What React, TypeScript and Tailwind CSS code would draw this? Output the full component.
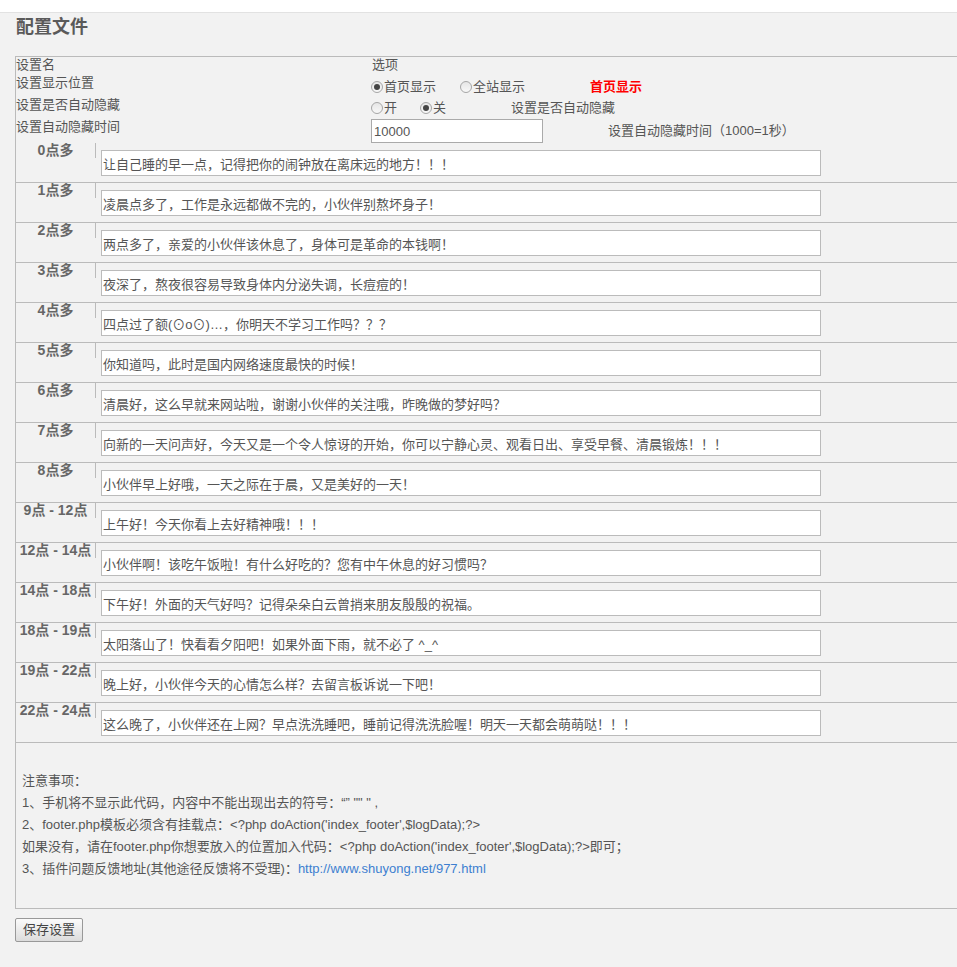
import React from 'react';

const font = { fontFamily: '"Liberation Sans", "Noto Sans CJK SC", sans-serif' };

const rows: [string, string][] = [
  ['0点多', '让自己睡的早一点，记得把你的闹钟放在离床远的地方！！！'],
  ['1点多', '凌晨点多了，工作是永远都做不完的，小伙伴别熬坏身子！'],
  ['2点多', '两点多了，亲爱的小伙伴该休息了，身体可是革命的本钱啊！'],
  ['3点多', '夜深了，熬夜很容易导致身体内分泌失调，长痘痘的！'],
  ['4点多', '四点过了额(⊙o⊙)…，你明天不学习工作吗？？？'],
  ['5点多', '你知道吗，此时是国内网络速度最快的时候！'],
  ['6点多', '清晨好，这么早就来网站啦，谢谢小伙伴的关注哦，昨晚做的梦好吗？'],
  ['7点多', '向新的一天问声好，今天又是一个令人惊讶的开始，你可以宁静心灵、观看日出、享受早餐、清晨锻炼！！！'],
  ['8点多', '小伙伴早上好哦，一天之际在于晨，又是美好的一天！'],
  ['9点 - 12点', '上午好！今天你看上去好精神哦！！！'],
  ['12点 - 14点', '小伙伴啊！该吃午饭啦！有什么好吃的？您有中午休息的好习惯吗？'],
  ['14点 - 18点', '下午好！外面的天气好吗？记得朵朵白云曾捎来朋友殷殷的祝福。'],
  ['18点 - 19点', '太阳落山了！快看看夕阳吧！如果外面下雨，就不必了 ^_^'],
  ['19点 - 22点', '晚上好，小伙伴今天的心情怎么样？去留言板诉说一下吧！'],
  ['22点 - 24点', '这么晚了，小伙伴还在上网？早点洗洗睡吧，睡前记得洗洗脸喔！明天一天都会萌萌哒！！！'],
];

const Radio = ({ checked = false }: { checked?: boolean }) => (
  <span className="inline-flex items-center justify-center w-[12px] h-[12px] rounded-full border border-[#a6a6a6] bg-gradient-to-b from-[#e6e6e6] to-[#f8f8f8] mr-[1px] shrink-0">
    {checked && <span className="w-[6px] h-[6px] rounded-full bg-[#444]" />}
  </span>
);

export default function App() {
  return (
    <div className="min-h-screen bg-[#f2f2f2] text-[#555] text-[13px]" style={font}>
      <div className="h-[13px] bg-white border-b border-[#e2e2e2]" />
      <h2 className="ml-[16px] mt-[2px] text-[18px] leading-[24px] font-bold text-[#5a5a5a]">配置文件</h2>

      <div className="ml-[15px] mt-[17px] border-l border-t border-b border-[#bbb]">
        {/* settings header */}
        <div className="flex h-[17px]">
          <div className="w-[356px] leading-[16px]">设置名</div>
          <div className="leading-[16px]">选项</div>
        </div>
        <div className="flex h-[22px]">
          <div className="w-[355px] leading-[18px]">设置显示位置</div>
          <div className="flex items-center pt-[5px] h-[21px]">
            <Radio checked />
            <span>首页显示</span>
            <span className="w-[24px]" />
            <Radio />
            <span>全站显示</span>
            <span className="w-[65px]" />
            <span className="text-[#f00] font-bold">首页显示</span>
          </div>
        </div>
        <div className="flex h-[22px]">
          <div className="w-[355px] leading-[18px]">设置是否自动隐藏</div>
          <div className="flex items-center pt-[4px] h-[20px]">
            <Radio />
            <span>开</span>
            <span className="w-[23px]" />
            <Radio checked />
            <span>关</span>
            <span className="w-[65px]" />
            <span>设置是否自动隐藏</span>
          </div>
        </div>
        <div className="flex h-[25px]">
          <div className="w-[355px] leading-[18px]">设置自动隐藏时间</div>
          <div className="flex items-center pt-[1px] h-[25px]">
            <input
              readOnly
              defaultValue="10000"
              className="w-[172px] h-[24px] border border-[#aaa] bg-white px-[2px] text-[13px] text-[#555] outline-none"
              style={font}
            />
            <span className="ml-[65px]">设置自动隐藏时间（1000=1秒）</span>
          </div>
        </div>

        {/* hourly messages */}
        {rows.map(([label, text]) => (
          <div key={label} className="flex items-start h-[40px] border-b border-[#bbb]">
            <div className="w-[80px] h-[15px] border-r border-[#bbb] text-center text-[14px] leading-[15px] font-bold text-[#666] whitespace-nowrap">
              {label}
            </div>
            <input
              readOnly
              defaultValue={text}
              className="ml-[5px] mt-[7px] w-[720px] h-[26px] border border-[#bbb] bg-white px-[1px] text-[13px] text-[#555] outline-none"
              style={font}
            />
          </div>
        ))}

        {/* notes */}
        <div className="pl-[6px] pt-[27px] pb-[28px] text-[13px] leading-[22px] text-[#555] whitespace-nowrap">
          <p>注意事项：</p>
          <p>1、手机将不显示此代码，内容中不能出现出去的符号：“” "" " ,</p>
          <p>2、footer.php模板必须含有挂载点：&lt;?php doAction('index_footer',$logData);?&gt;</p>
          <p>如果没有，请在footer.php你想要放入的位置加入代码：&lt;?php doAction('index_footer',$logData);?&gt;即可；</p>
          <p>
            3、插件问题反馈地址(其他途径反馈将不受理)：
            <a className="text-[#3d7fd0]">http://www.shuyong.net/977.html</a>
          </p>
        </div>
      </div>

      <button
        className="ml-[15px] mt-[9px] w-[68px] h-[24px] border border-[#999] rounded-[2px] bg-gradient-to-b from-[#fbfbfb] to-[#dcdcdc] text-[13px] text-[#444]"
        style={font}
      >
        保存设置
      </button>
    </div>
  );
}
